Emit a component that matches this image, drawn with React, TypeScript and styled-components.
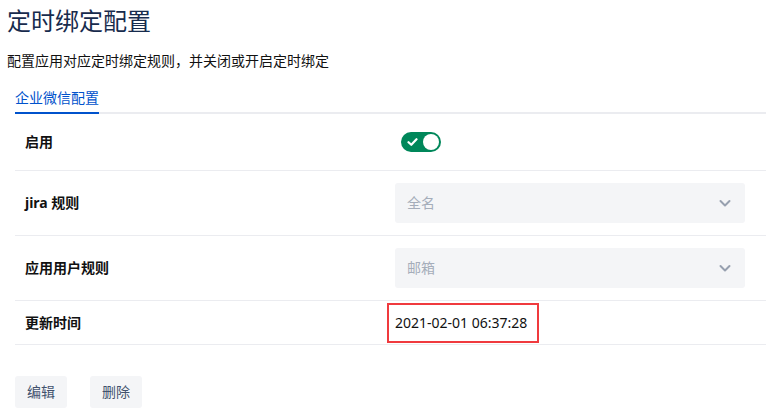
import React from 'react';
import styled, { createGlobalStyle } from 'styled-components';

const GlobalStyle = createGlobalStyle`
  html, body {
    margin: 0;
    padding: 0;
    background: #ffffff;
  }
  body {
    font-family: "Noto Sans", "Noto Sans CJK SC", sans-serif;
    font-size: 14px;
    color: #172b4d;
  }
`;

const Page = styled.div`
  padding: 5px 0 0 7px;
  overflow: hidden;
`;

const Title = styled.h1`
  margin: 0;
  font-size: 24px;
  line-height: 32px;
  font-weight: 400;
  color: #172b4d;
`;

const Subtitle = styled.p`
  margin: 14px 0 0;
  font-size: 14px;
  line-height: 20px;
  color: #111;
`;

const Section = styled.div`
  margin: 17px 0 0 8px;
`;

const TabBar = styled.div`
  display: flex;
  border-bottom: 2px solid #ebecf0;
`;

const Tab = styled.div<{ $active?: boolean }>`
  font-size: 14px;
  line-height: 20px;
  padding-bottom: 4px;
  margin-bottom: -2px;
  color: ${p => (p.$active ? '#0052cc' : '#42526e')};
  border-bottom: 2px solid ${p => (p.$active ? '#0052cc' : 'transparent')};
`;

const Table = styled.div`
  display: flex;
  flex-direction: column;
`;

const Row = styled.div<{ $height: number }>`
  display: grid;
  grid-template-columns: 380px 350px;
  align-items: center;
  height: ${p => p.$height}px;
  border-bottom: 1px solid #ebecf0;
`;

const Label = styled.div`
  padding-left: 10px;
  font-weight: 700;
  font-size: 14px;
  line-height: 20px;
  color: #111;
`;

const Value = styled.div`
  display: flex;
  align-items: center;
`;

const Toggle = styled.div`
  position: relative;
  width: 40px;
  height: 20px;
  margin-left: 6px;
  border-radius: 10px;
  background: #00875a;
`;

const Knob = styled.span`
  position: absolute;
  top: 2px;
  right: 2px;
  width: 16px;
  height: 16px;
  border-radius: 50%;
  background: #ffffff;
`;

const Check = styled.svg`
  position: absolute;
  left: 6px;
  top: 5px;
`;

const Select = styled.div`
  display: flex;
  align-items: center;
  justify-content: space-between;
  width: 350px;
  height: 40px;
  box-sizing: border-box;
  padding: 0 12px 0 12px;
  border-radius: 3px;
  background: #f4f5f7;
  color: #a5adba;
  font-size: 14px;
  line-height: 20px;
`;

const Highlight = styled.div`
  display: flex;
  align-items: center;
  box-sizing: border-box;
  width: 152px;
  height: 40px;
  margin-left: -8px;
  padding-left: 6px;
  border: 2px solid #f03a3e;
  font-size: 14px;
  color: #111;
`;

const Actions = styled.div`
  display: flex;
  gap: 23px;
  margin-top: 31px;
`;

const Button = styled.button`
  height: 32px;
  padding: 0 12px;
  border: none;
  border-radius: 3px;
  background: #f4f5f7;
  color: #42526e;
  font-family: inherit;
  font-size: 14px;
  line-height: 20px;
  cursor: pointer;
`;

const Chevron = () => (
  <svg width="16" height="16" viewBox="0 0 16 16">
    <path d="M3.5 6l4.5 4.5L12.5 6" fill="none" stroke="#97a0af" strokeWidth="2" strokeLinecap="round" strokeLinejoin="round" />
  </svg>
);

export default function App() {
  return (
    <Page>
      <GlobalStyle />
      <Title>定时绑定配置</Title>
      <Subtitle>配置应用对应定时绑定规则，并关闭或开启定时绑定</Subtitle>
      <Section>
        <TabBar>
          <Tab $active>企业微信配置</Tab>
        </TabBar>
        <Table>
          <Row $height={56}>
            <Label>启用</Label>
            <Value>
              <Toggle>
                <Check width="11" height="10" viewBox="0 0 11 10">
                  <path d="M1.5 5.2l2.8 2.6L9.5 2.2" fill="none" stroke="#fff" strokeWidth="2.2" strokeLinecap="round" strokeLinejoin="round" />
                </Check>
                <Knob />
              </Toggle>
            </Value>
          </Row>
          <Row $height={64}>
            <Label>jira 规则</Label>
            <Value>
              <Select>
                <span>全名</span>
                <Chevron />
              </Select>
            </Value>
          </Row>
          <Row $height={64}>
            <Label>应用用户规则</Label>
            <Value>
              <Select>
                <span>邮箱</span>
                <Chevron />
              </Select>
            </Value>
          </Row>
          <Row $height={43}>
            <Label>更新时间</Label>
            <Value>
              <Highlight>2021-02-01 06:37:28</Highlight>
            </Value>
          </Row>
        </Table>
        <Actions>
          <Button>编辑</Button>
          <Button>删除</Button>
        </Actions>
      </Section>
    </Page>
  );
}
